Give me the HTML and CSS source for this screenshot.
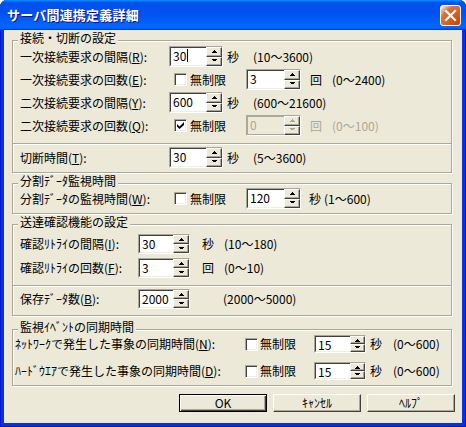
FILE: index.html
```html
<!DOCTYPE html>
<html lang="ja">
<head>
<meta charset="utf-8">
<title>サーバ間連携定義詳細</title>
<link rel="stylesheet" href="styles.css">
</head>
<body>
<div class="window">
  <div class="titlebar">
    <span class="title">サーバ間連携定義詳細</span>
    <span class="close"><svg width="19" height="19" viewBox="0 0 19 19"><path d="M5 5 L14 14 M14 5 L5 14" stroke="#fff" stroke-width="2.2" stroke-linecap="square"/></svg></span>
  </div>
  <div class="client">
    <div class="group g1">
      <span class="gtitle">接続・切断の設定</span>
      <div class="row">
        <span class="lbl">一次接続要求の間隔(<u>R</u>):</span>
        <div class="spin sp54"><span class="edit">30<i class="caret"></i></span><span class="sb"><i class="up"></i><i class="dn"></i></span></div>
        <span class="unit ua">秒</span><span class="range">(10～3600)</span>
      </div>
      <div class="row">
        <span class="lbl">一次接続要求の回数(<u>E</u>):</span>
        <span class="chk"></span><span class="chklbl">無制限</span>
        <div class="spin sp55"><span class="edit">3</span><span class="sb"><i class="up"></i><i class="dn"></i></span></div>
        <span class="unit ub">回</span><span class="range">(0～2400)</span>
      </div>
      <div class="row">
        <span class="lbl">二次接続要求の間隔(<u>Y</u>):</span>
        <div class="spin sp54"><span class="edit">600</span><span class="sb"><i class="up"></i><i class="dn"></i></span></div>
        <span class="unit ua">秒</span><span class="range">(600～21600)</span>
      </div>
      <div class="row">
        <span class="lbl">二次接続要求の回数(<u>Q</u>):</span>
        <span class="chk"><svg width="7" height="7" viewBox="0 0 7 7"><polygon points="0,2 2.5,4.5 7,0 7,3 2.5,7 0,4.5" fill="#000"/></svg></span><span class="chklbl">無制限</span>
        <div class="spin sp55 disabled"><span class="edit">0</span><span class="sb"><i class="up"></i><i class="dn"></i></span></div>
        <span class="unit ub dis">回</span><span class="range dis">(0～100)</span>
      </div>
      <div class="sep"></div>
      <div class="row">
        <span class="lbl">切断時間(<u>T</u>):</span>
        <div class="spin sp54"><span class="edit">30</span><span class="sb"><i class="up"></i><i class="dn"></i></span></div>
        <span class="unit ua">秒</span><span class="range">(5～3600)</span>
      </div>
    </div>

    <div class="group g2">
      <span class="gtitle">分割ﾃﾞｰﾀ監視時間</span>
      <div class="row">
        <span class="lbl">分割ﾃﾞｰﾀの監視時間(<u>W</u>):</span>
        <span class="chk"></span><span class="chklbl">無制限</span>
        <div class="spin sp55"><span class="edit">120</span><span class="sb"><i class="up"></i><i class="dn"></i></span></div>
        <span class="unit uc">秒</span><span class="range">(1～600)</span>
      </div>
    </div>

    <div class="group g3">
      <span class="gtitle">送達確認機能の設定</span>
      <div class="row">
        <span class="lbl">確認ﾘﾄﾗｲの間隔(<u>I</u>):</span>
        <div class="spin sp52"><span class="edit">30</span><span class="sb"><i class="up"></i><i class="dn"></i></span></div>
        <span class="unit ud">秒</span><span class="range">(10～180)</span>
      </div>
      <div class="row">
        <span class="lbl">確認ﾘﾄﾗｲの回数(<u>F</u>):</span>
        <div class="spin sp52"><span class="edit">3</span><span class="sb"><i class="up"></i><i class="dn"></i></span></div>
        <span class="unit ud">回</span><span class="range">(0～10)</span>
      </div>
      <div class="sep"></div>
      <div class="row">
        <span class="lbl">保存ﾃﾞｰﾀ数(<u>B</u>):</span>
        <div class="spin sp52"><span class="edit">2000</span><span class="sb"><i class="up"></i><i class="dn"></i></span></div>
        <span class="range rwide">(2000～5000)</span>
      </div>
    </div>

    <div class="group g4">
      <span class="gtitle">監視ｲﾍﾞﾝﾄの同期時間</span>
      <div class="row">
        <span class="lbl">ﾈｯﾄﾜｰｸで発生した事象の同期時間(<u>N</u>):</span>
        <span class="chk"></span><span class="chklbl">無制限</span>
        <div class="spin sp52 narrow"><span class="edit">15</span><span class="sb"><i class="up"></i><i class="dn"></i></span></div>
        <span class="unit ue">秒</span><span class="range">(0～600)</span>
      </div>
      <div class="row">
        <span class="lbl">ﾊｰﾄﾞｳｴｱで発生した事象の同期時間(<u>D</u>):</span>
        <span class="chk"></span><span class="chklbl">無制限</span>
        <div class="spin sp52 narrow"><span class="edit">15</span><span class="sb"><i class="up"></i><i class="dn"></i></span></div>
        <span class="unit ue">秒</span><span class="range">(0～600)</span>
      </div>
    </div>

    <div class="buttons">
      <button class="btn default">OK</button>
      <button class="btn">ｷｬﾝｾﾙ</button>
      <button class="btn">ﾍﾙﾌﾟ</button>
    </div>
  </div>
</div>
</body>
</html>
```
FILE: styles.css
```css
* { box-sizing: border-box; }
html, body { margin: 0; padding: 0; }
body {
  width: 466px;
  height: 427px;
  overflow: hidden;
  background: #ffffff;
  font-family: "Noto Sans CJK JP", "Noto Sans", sans-serif;
  font-size: 12px;
  color: #000;
}
u { text-decoration: underline; text-underline-offset: 1px; }

.window {
  width: 466px;
  height: 427px;
  display: flex;
  flex-direction: column;
  background: #0831d9;
  border-radius: 7px 7px 0 0;
  overflow: hidden;
  box-shadow: inset 1px 0 #0019cf, inset -1px 0 #001ea0, inset 0 -1px #001ea0;
}
.titlebar {
  height: 30px;
  flex: none;
  display: flex;
  align-items: center;
  padding: 0 5px 0 7px;
  background: linear-gradient(180deg, #0997ff, #0053ee 8%, #0050ee 40%, #0066ff 88%, #0066ff 93%, #005bff 95%, #003dd7 96%, #003dd7);
}
.title {
  flex: 1;
  color: #fff;
  font-weight: bold;
  font-size: 13px;
  line-height: 16px;
  text-shadow: 1px 1px #0f1089;
  letter-spacing: 0.2px;
}
.close {
  width: 21px;
  height: 21px;
  border: 1px solid #fff;
  border-radius: 3px;
  display: flex;
  align-items: center;
  justify-content: center;
  background: radial-gradient(circle at 90% 90%, #cc4600 0%, #dc6527 55%, #cd7546 70%, #ffccb2 90%, #ffffff 100%);
}
.close svg { display: block; }

.client {
  flex: 1;
  margin: 0 4px 4px;
  background: #ece9d8;
  padding: 10px 10px 0 8px;
  display: flex;
  flex-direction: column;
}

.group {
  position: relative;
  border: 1px solid #aca899;
  box-shadow: inset 1px 1px #fff, 1px 1px #fff;
  display: flex;
  flex-direction: column;
}
.gtitle {
  position: absolute;
  top: -10px;
  left: 5px;
  padding: 0 2px;
  line-height: 14px;
  background: #ece9d8;
  white-space: nowrap;
}
.sep {
  flex: none;
  height: 2px;
  border-top: 1px solid #aca899;
  border-bottom: 1px solid #fff;
}

.row {
  display: flex;
  align-items: center;
  flex: none;
  white-space: nowrap;
  line-height: 14px;
}
.lbl { flex: none; }
.unit, .range, .chklbl { flex: none; }
.dis { color: #aca899; }

/* group 1 */
.g1 { padding: 5px 0 4px 7px; margin-top: 0; }
.g1 .row { height: 21px; }
.g1 .row + .row { margin-top: 2px; }
.g1 .sep { margin: 7px 0 2px -7px; }
.g1 .lbl { width: 149px; }

/* group 2 */
.g2 { padding: 4px 0 4px 7px; margin-top: 10px; }
.g2 .row { height: 21px; }
.g2 .lbl { width: 149px; }

/* group 3 */
.g3 { padding: 9px 0 6px 7px; margin-top: 10px; }
.g3 .row { height: 20px; }
.g3 .row + .row { margin-top: 4px; }
.g3 .sep { margin: 7px 0 2px -7px; }
.g3 .lbl { width: 118px; }

/* group 4 */
.g4 { padding: 5px 0 5px 2px; margin-top: 13px; }
.g4 .row { height: 18px; }
.g4 .row + .row { margin-top: 9px; }
.g4 .lbl { width: 230px; }

/* checkbox */
.chk {
  flex: none;
  width: 13px;
  height: 13px;
  margin-left: 5px;
  background: #fff;
  border: 1px solid;
  border-color: #aca899 #fff #fff #aca899;
  box-shadow: inset 1px 1px #404040, inset -1px -1px #f1efe2;
  display: flex;
  align-items: center;
  justify-content: center;
}
.chk svg { display: block; }
.chklbl { margin-left: 3px; width: 56px; }
.g4 .chk { margin-left: 0; }
.g4 .chklbl { margin-left: 2px; width: 54px; }

/* spin edit */
.spin {
  flex: none;
  display: flex;
  height: 100%;
  border: 1px solid;
  border-color: #aca899 #fff #fff #aca899;
}
.sp54 { width: 54px; }
.sp55 { width: 55px; }
.sp52 { width: 52px; }
.edit {
  flex: 1;
  min-width: 0;
  display: flex;
  align-items: flex-start;
  padding: 1px 0 0 2px;
  background: #fff;
  border-top: 1px solid #404040;
  border-left: 1px solid #404040;
  border-bottom: 1px solid #f1efe2;
  line-height: 14px;
}
.caret {
  display: block;
  width: 1px;
  height: 13px;
  margin-left: 1px;
  background: #000;
}
.sb {
  flex: none;
  width: 16px;
  display: flex;
  flex-direction: column;
}
.narrow .sb { width: 15px; }
.sb i {
  flex: 1;
  display: flex;
  align-items: center;
  justify-content: center;
  background: #ece9d8;
  border: 1px solid;
  border-color: #fff #404040 #404040 #fff;
  box-shadow: inset -1px -1px #aca899;
}
.sb i::before {
  content: "";
  display: block;
  width: 1px;
  height: 1px;
  background: #000;
}
.sb .up::before {
  margin-top: -2px;
  box-shadow: -1px 1px #000, 0 1px #000, 1px 1px #000, -2px 2px #000, -1px 2px #000, 0 2px #000, 1px 2px #000, 2px 2px #000;
}
.sb .dn::before {
  margin-top: -1px;
  box-shadow: -2px -1px #000, -1px -1px #000, 0 -1px #000, 1px -1px #000, 2px -1px #000, -1px 0 #000, 1px 0 #000;
}
.disabled .edit { background: #ece9d8; color: #aca899; border-color: #aca899; }
.disabled .sb i::before { background: #aca899; }
.disabled .sb .up::before {
  box-shadow: -1px 1px #aca899, 0 1px #aca899, 1px 1px #aca899, -2px 2px #aca899, -1px 2px #aca899, 0 2px #aca899, 1px 2px #aca899, 2px 2px #aca899;
}
.disabled .sb .dn::before {
  box-shadow: -2px -1px #aca899, -1px -1px #aca899, 0 -1px #aca899, 1px -1px #aca899, 2px -1px #aca899, -1px 0 #aca899, 1px 0 #aca899;
}

/* units / ranges */
.ua { margin-left: 4px; width: 26px; }
.ub { margin-left: 9px; width: 22px; }
.uc { margin-left: 8px; width: 15px; }
.ud { margin-left: 12px; width: 22px; }
.ue { margin-left: 4px; width: 23px; }
.rwide { margin-left: 33px; }

/* buttons */
.buttons {
  display: flex;
  justify-content: flex-end;
  gap: 6px;
  margin: 8px -3px 0 0;
}
.btn {
  width: 88px;
  height: 18px;
  padding: 0;
  margin: 0;
  font: inherit;
  font-size: 12px;
  line-height: 14px;
  color: #000;
  background: #ece9d8;
  border: 1px solid;
  border-color: #fff #404040 #404040 #fff;
  box-shadow: inset -1px -1px #aca899;
  border-radius: 0;
}
.btn.default {
  border: 1px solid #000;
  box-shadow: inset 1px 1px #fff, inset -1px -1px #404040, inset -2px -2px #aca899;
}
```
